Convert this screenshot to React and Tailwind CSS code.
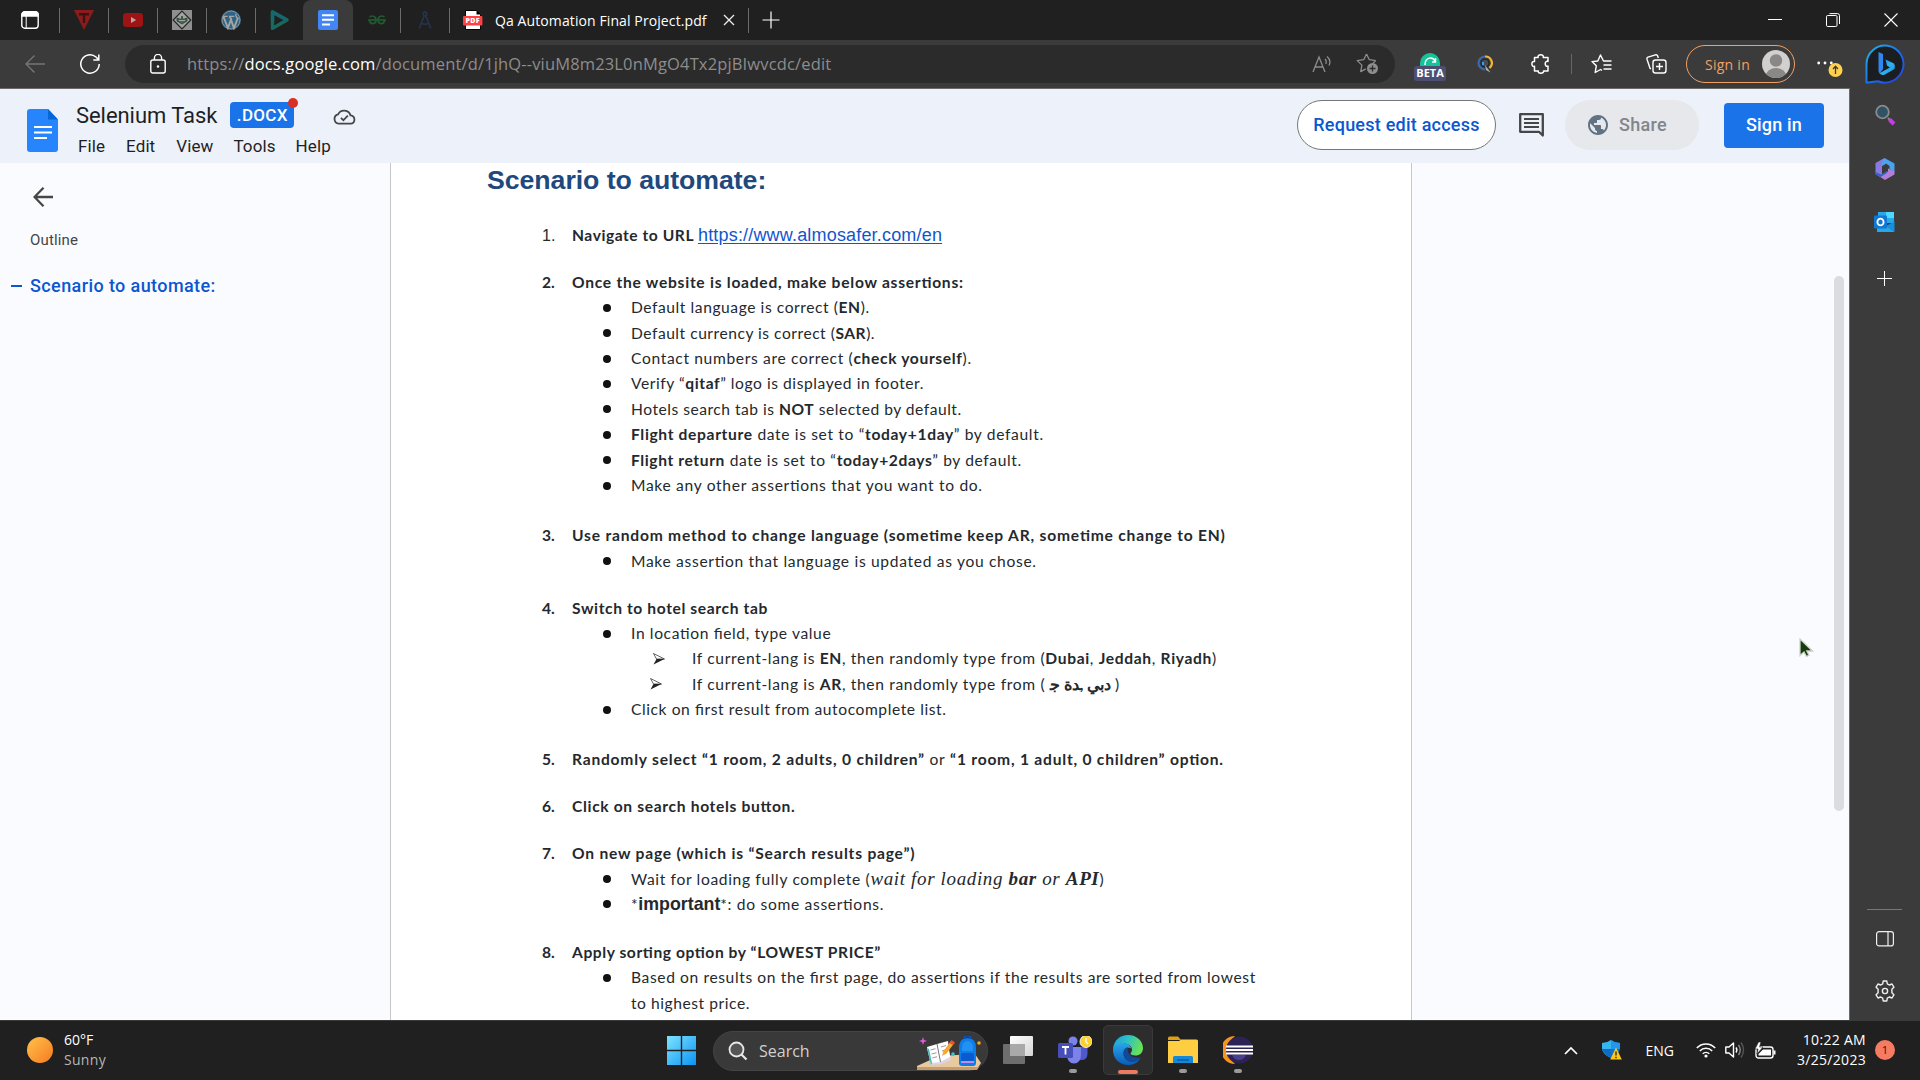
import React from "react";

const B = ({ children }) => <b className="font-bold">{children}</b>;

const Sep = () => <div className="h-[25px] w-px shrink-0 bg-[#6b6b6b]" />;
const Tab = ({ children, w = "w-12" }) => (
  <div className={`flex h-10 shrink-0 items-center justify-center ${w}`}>{children}</div>
);

function TabBar() {
  return (
    <div className="flex h-10 shrink-0 items-center bg-[#202020]">
      <Tab w="w-[59px]">
        <svg width="18" height="18" viewBox="0 0 18 18" fill="none" stroke="#fff" strokeWidth="1.4">
          <rect x="0.8" y="0.8" width="16.4" height="16.4" rx="3" />
          <path d="M1 3.8 Q1 1 4 1 H14 Q17 1 17 3.8 V5 H1Z" fill="#fff" />
          <path d="M5.2 5V17" strokeWidth="1" />
        </svg>
      </Tab>
      <Sep />
      <Tab>
        <svg width="20" height="20" viewBox="0 0 20 20">
          <path d="M0 0H20L10 20Z" fill="#8c1c1c" />
          <path d="M5 4.2H15M10 4.2V13" stroke="#3a1414" strokeWidth="2.4" fill="none" />
        </svg>
      </Tab>
      <Sep />
      <Tab>
        <svg width="20" height="14" viewBox="0 0 20 14">
          <rect width="20" height="14" rx="3.4" fill="#9e1414" />
          <path d="M8 4V10L13.2 7Z" fill="#b5a5a5" />
        </svg>
      </Tab>
      <Sep />
      <Tab>
        <svg width="20" height="20" viewBox="0 0 20 20">
          <rect width="20" height="20" fill="#8f8f8f" />
          <path d="M10 1.2L18.8 10L10 18.8L1.2 10Z" fill="#a3a3a3" stroke="#252525" strokeWidth="1.2" />
          <path d="M5 8L9 9.5L10 6L11 9.5L15 8V11L10 14L5 11Z" fill="#3f6b50" stroke="#28402f" strokeWidth=".8" />
          <path d="M7 10.5H13" stroke="#a3a3a3" />
        </svg>
      </Tab>
      <Sep />
      <Tab>
        <svg width="20" height="20" viewBox="0 0 24 24">
          <circle cx="12" cy="12" r="12" fill="#2f6485" />
          <circle cx="12" cy="12" r="10.7" fill="none" stroke="#9a9a9a" strokeWidth="1" />
          <path d="M3 8.2L8.3 21.5L12 11.5L15.5 21.8L20.5 9" fill="none" stroke="#a5a5a5" strokeWidth="2.2" />
          <path d="M2.5 7.7H8M9.5 7.7H16M18 4.5C16.5 6.5 19 8 19.8 10.5" fill="none" stroke="#a5a5a5" strokeWidth="1.5" />
          <path d="M10.5 8L12.5 12.5" stroke="#a5a5a5" strokeWidth="2" />
        </svg>
      </Tab>
      <Sep />
      <Tab>
        <svg width="20" height="20" viewBox="0 0 20 20" fill="none" strokeLinejoin="round">
          <path d="M2.5 2L17 10L2.5 18.4Z" stroke="#176a5c" strokeWidth="3.4" />
          <path d="M2.5 12V2L17 10" stroke="#17676f" strokeWidth="3.4" />
        </svg>
      </Tab>
      <div className="-ml-px flex h-10 w-[50px] shrink-0 items-center justify-center rounded-t-lg bg-[#3b3b3b]">
        <svg width="20" height="20" viewBox="0 0 20 20">
          <rect width="20" height="20" rx="2" fill="#4285f4" />
          <path d="M4 5.2H16M4 9.8H16M4 14.4H12" stroke="#fff" strokeWidth="2" />
        </svg>
      </div>
      <Tab w="w-[47px]">
        <svg width="18" height="10" viewBox="0 0 18 10" fill="none" stroke="#1f5a30" strokeWidth="1.7">
          <path d="M0 5H18" />
          <path d="M1.5 2.2C3.2 .2 8 .6 8 5C8 9.6 2 10 1.4 5.2" />
          <path d="M16.5 2.2C14.8 .2 10 .6 10 5C10 9.6 16 10 16.6 5.2" />
        </svg>
      </Tab>
      <Sep />
      <Tab>
        <svg width="14" height="18" viewBox="0 0 14 18" fill="none" stroke="#27334a" strokeWidth="1.7">
          <circle cx="7" cy="3" r="1.8" />
          <path d="M6.2 5L1.2 17.5M7.8 5L12.8 17.5M2.5 12Q7 14.5 11.5 12M7 0V2" />
        </svg>
      </Tab>
      <Sep />
      <div className="flex h-10 w-[298px] shrink-0 items-center">
        <svg className="ml-[13px]" width="20" height="20" viewBox="0 0 20 20">
          <path d="M2.5 .5H13.5L17.5 4.5V19.5H2.5Z" fill="#fff" stroke="#000" />
          <path d="M13.5 .5V4.5H17.5Z" fill="#000" />
          <rect x="0" y="6" width="19.4" height="9.6" rx="1" fill="#ff4141" />
          <text x="9.7" y="13.4" textAnchor="middle" fill="#fff" fontSize="7" fontWeight="900" fontFamily="Open Sans" letterSpacing=".4">PDF</text>
        </svg>
        <span className="ml-3 whitespace-nowrap font-['Open_Sans'] text-[14px] tracking-[.1px] text-white">Qa Automation Final Project.pdf</span>
        <svg className="ml-auto mr-[13px]" width="12" height="12" viewBox="0 0 12 12" stroke="#eee" strokeWidth="1.3">
          <path d="M1 1L11 11M11 1L1 11" />
        </svg>
      </div>
      <Sep />
      <svg className="ml-[13px]" width="18" height="18" viewBox="0 0 18 18" stroke="#fff" strokeWidth="1.2">
        <path d="M9 .5V17.5M.5 9H17.5" />
      </svg>
      <div className="ml-auto mr-[22px] flex items-center gap-[44px]">
        <svg width="14" height="14" viewBox="0 0 14 14"><path d="M0 6.5H14" stroke="#fff" /></svg>
        <svg width="14" height="14" viewBox="0 0 14 14" fill="none" stroke="#fff">
          <rect x=".5" y="2.5" width="10.5" height="11" rx="1.2" />
          <path d="M3.5 .6H11.5Q13.5 .6 13.5 2.6V11" />
        </svg>
        <svg width="14" height="14" viewBox="0 0 14 14" stroke="#fff" strokeWidth="1.1"><path d="M.5 .5L13.5 13.5M13.5 .5L.5 13.5" /></svg>
      </div>
    </div>
  );
}

function Toolbar() {
  return (
    <div className="flex h-12 shrink-0 items-center bg-[#3b3b3b]">
      <svg className="ml-[25px] shrink-0" width="20" height="18" viewBox="0 0 20 18" fill="none" stroke="#757575" strokeWidth="1.4">
        <path d="M20 9H1M9.5 .5L1 9L9.5 17.5" />
      </svg>
      <svg className="ml-[35px] shrink-0" width="20" height="20" viewBox="0 0 20 20" fill="none" stroke="#fff" strokeWidth="1.5">
        <path d="M19.2 10A9.2 9.2 0 1 1 16 3L18.6 5.6M18.8 .5V6H13.3" />
      </svg>
      <div className="ml-[25px] flex h-[38px] w-[1270px] shrink-0 items-center rounded-full bg-[#2b2b2b]">
        <svg className="ml-[25px]" width="16" height="20" viewBox="0 0 16 20" fill="none" stroke="#fff" strokeWidth="1.4">
          <rect x=".8" y="6" width="14.4" height="13" rx="2" />
          <path d="M4.4 6V4A3.6 3.6 0 0 1 11.6 4V6" />
          <circle cx="8" cy="12.5" r="1.2" fill="#fff" stroke="none" />
        </svg>
        <span className="ml-[21px] whitespace-nowrap font-['Open_Sans'] text-[16.5px] tracking-[.15px] text-[#8d8d8d]">
          https://<span className="text-white">docs.google.com</span>/document/d/1jhQ--viuM8m23L0nMgO4Tx2pjBIwvcdc/edit
        </span>
        <svg className="ml-auto" width="20" height="18" viewBox="0 0 20 18" fill="none" stroke="#8d8d8d" strokeWidth="1.3">
          <path d="M1 17L7 2L13 17M3 12H11M13 4Q15 6 13.8 9M15 1.5Q19.5 5 17 10.5" />
        </svg>
        <svg className="ml-[24px] mr-[15px]" width="24" height="22" viewBox="0 0 24 22">
          <path d="M10.5 1L13.3 6.7L19.8 7.6M19.8 7.6L17 10.3M10.5 1L7.7 6.7L1.2 7.6L5.9 12.1L4.7 18.6L9.8 15.9" fill="none" stroke="#8d8d8d" strokeWidth="1.3" strokeLinejoin="round" />
          <circle cx="16.5" cy="15.5" r="5.5" fill="#8d8d8d" />
          <path d="M16.5 12.5V18.5M13.5 15.5H19.5" stroke="#2b2b2b" strokeWidth="1.3" />
        </svg>
      </div>
      <div className="ml-[19px] flex w-8 shrink-0 flex-col items-center">
        <div className="mt-[5px] flex h-[13px] w-5 items-start justify-center overflow-hidden rounded-t-full bg-[#15c39a]">
          <svg width="20" height="14" viewBox="0 0 20 14" fill="none" stroke="#fff" strokeWidth="1.5"><path d="M5 12C5 3.5 13 3.5 15 8M15.5 5V9H12" /></svg>
        </div>
        <div className="flex h-[15px] w-8 items-center justify-center rounded-[3px] bg-[#4d4f72] font-['Open_Sans'] text-[11px] font-bold text-white">BETA</div>
      </div>
      <svg className="ml-[31px] shrink-0" width="16" height="18" viewBox="0 0 16 18" fill="none">
        <path d="M8 1.5A6.5 6.5 0 0 0 8 14.5" stroke="#3f68a8" strokeWidth="2.2" />
        <path d="M8 1.5A6.5 6.5 0 0 1 12.5 13" stroke="#f2b632" strokeWidth="2.2" />
        <circle cx="8" cy="8" r="4" fill="#444c55" stroke="#222" />
        <rect x="5" y="7" width="2" height="3" fill="#3aa0e8" />
        <path d="M8 10L13.5 17.5L9 15Z" fill="#b5b5b5" />
      </svg>
      <svg className="ml-[38px] shrink-0" width="20" height="20" viewBox="0 0 20 20" fill="none" stroke="#fff" strokeWidth="1.5" strokeLinejoin="round">
        <path d="M3.5 3.5H7.2C6.5 1.8 7.8 .8 9.7 .8C11.6 .8 12.9 1.8 12.2 3.5H17V7.5C15.4 7 14.2 8 14.2 9.8C14.2 11.6 15.4 12.6 17 12.1V17H12.5C13 18.3 11.6 19.2 9.8 19.2C8 19.2 6.8 18.3 7.3 17H3.5V12.3C2 12.8 .9 11.6 .9 9.9C.9 8.2 2 7.1 3.5 7.6Z" />
      </svg>
      <div className="ml-[20px] h-5 w-px bg-[#666]" />
      <svg className="ml-[19px] shrink-0" width="21" height="20" viewBox="0 0 21 20" fill="none" stroke="#fff" strokeWidth="1.4" strokeLinejoin="round">
        <path d="M13.5 7H12.5L9.5 1L6.8 7L1 7.6L5.3 11.8L4.2 18.5L9.5 15.5L11 16.3M13 7H20.5M12.5 11H20.5M12.5 15H20.5" />
      </svg>
      <svg className="ml-[34px] shrink-0" width="21" height="20" viewBox="0 0 21 20" fill="none" stroke="#fff" strokeWidth="1.4">
        <path d="M5 14.8L4 14.3L1 5.3Q.6 3.8 2 3.2L9.5 .8Q11 .4 11.6 1.8L12.3 4" />
        <rect x="7" y="6" width="13" height="13" rx="2.5" />
        <path d="M13.5 9V16M10 12.5H17" />
      </svg>
      <div className="ml-[19px] flex h-[38px] w-[109px] shrink-0 items-center justify-between rounded-full border border-[#f2a063] pl-[18px] pr-1 text-[#f2a063]">
        <span className="whitespace-nowrap font-['Open_Sans'] text-[14px] tracking-[.26px]">Sign in</span>
        <svg width="28" height="28" viewBox="0 0 28 28">
          <clipPath id="av"><circle cx="14" cy="14" r="14" /></clipPath>
          <g clipPath="url(#av)">
            <rect width="28" height="28" fill="#d2d0ce" />
            <circle cx="14" cy="10.5" r="6.2" fill="#8a8886" />
            <ellipse cx="14" cy="25.5" rx="10" ry="7.5" fill="#8a8886" />
          </g>
        </svg>
      </div>
      <svg className="ml-[22px] mt-[12px] shrink-0" width="26" height="26" viewBox="0 0 26 26">
        <g fill="#fff"><circle cx="1.7" cy="6" r="1.4" /><circle cx="8" cy="6" r="1.4" /><circle cx="14.3" cy="6" r="1.4" /></g>
        <circle cx="18.5" cy="13" r="7" fill="#ffd14f" />
        <path d="M18.5 17V9.5M16 12L18.5 9.3L21 12" fill="none" stroke="#3b3b3b" strokeWidth="1.3" />
      </svg>
      <svg className="ml-[22px] shrink-0" width="40" height="40" viewBox="0 0 40 40">
        <defs>
          <linearGradient id="bo" x1="0" y1="0" x2="1" y2="1"><stop stopColor="#1fb6e8" /><stop offset=".6" stopColor="#1b66e8" /><stop offset="1" stopColor="#2340d8" /></linearGradient>
          <linearGradient id="bb" x1="0" y1="0" x2="1" y2="1"><stop stopColor="#2a7bea" /><stop offset=".5" stopColor="#2db4ee" /><stop offset="1" stopColor="#1f8af0" /></linearGradient>
        </defs>
        <path d="M1.5 38.5V20A18.5 18.5 0 1 1 13 37.2C9 37.2 7 38.8 1.5 38.5Z" fill="#1b1d20" stroke="url(#bo)" strokeWidth="2" />
        <path d="M13.5 8L18 10V25L14.8 29.5Q13.5 28.5 13.5 26.5Z" fill="#2f86ee" />
        <path d="M20.5 15.5L29 19.5Q30.5 21.5 29.5 25L20 30.5Q16.5 32 14.5 29.3L25 23.4L22 21.5Z" fill="url(#bb)" />
      </svg>
    </div>
  );
}

function DocsHeader() {
  return (
    <div className="flex h-[74px] shrink-0 items-start bg-[#edf1fa] font-[Roboto]">
      <svg className="ml-[27px] mt-5 shrink-0" width="31" height="43" viewBox="0 0 31 43">
        <path d="M3 0H21L31 10.5V40Q31 43 28 43H3Q0 43 0 40V3Q0 0 3 0Z" fill="#2684fc" />
        <path d="M21 0L31 10.5H21Z" fill="#0066da" />
        <path d="M7 18H25M7 23.5H25M7 29H20" stroke="#fff" strokeWidth="2.2" />
      </svg>
      <div className="ml-[18px] mt-[11px] flex flex-col">
        <div className="flex h-[30px] items-center">
          <span className="whitespace-nowrap pt-[2px] text-[22px] leading-[30px] tracking-[-.06px] text-[#1f1f1f]">Selenium Task</span>
          <div className="relative ml-[13px] flex h-[26px] w-16 items-center justify-center rounded-[4px] bg-[#1a73e8] pt-px text-[17px] font-medium tracking-[.3px] text-white">
            .DOCX
            <i className="absolute -right-1 -top-1 size-[10px] rounded-full bg-[#d93025]" />
          </div>
          <svg className="ml-[39px] mt-[3px]" width="23" height="16" viewBox="0 0 24 16" fill="none" stroke="#444746" strokeWidth="1.9">
            <path d="M6 15A5 5 0 0 1 5.3 5.2A7 7 0 0 1 18.3 6.3A4.4 4.4 0 0 1 18.800 15Z" />
            <path d="M8.3 9L10.8 11.4L15.5 6.5" />
          </svg>
        </div>
        <div className="mt-[3px] flex gap-[21px] pl-[2px] text-[17px] leading-[26px] tracking-[.1px] text-[#1f1f1f]">
          <span>File</span>
          <span>Edit</span>
          <span>View</span>
          <span className="-ml-px">Tools</span>
          <span className="-ml-px">Help</span>
        </div>
      </div>
      <div className="ml-auto mr-[25px] mt-[11px] flex items-center font-medium">
        <div className="flex h-[50px] w-[199px] items-center justify-center rounded-full border border-[#747775] bg-white pb-[2px] text-[18px] tracking-[.23px] text-[#0b57d0]">
          <span className="whitespace-nowrap">Request edit access</span>
        </div>
        <svg className="ml-[23px] mt-px" width="25" height="25" viewBox="0 0 25 25" fill="none" stroke="#444746" strokeWidth="2.3">
          <path d="M1.2 1.2H23.8V22.5L20 18.8H1.2Z" strokeLinejoin="round" />
          <path d="M5 6H20M5 10H20M5 14H20" strokeWidth="2" />
        </svg>
        <div className="ml-[21px] flex h-[50px] w-[134px] items-center rounded-full bg-[#e6e8ec] text-[18px] tracking-[.3px] text-[#80868b]">
          <svg className="ml-[23px]" width="20" height="20" viewBox="2 2 20 20" fill="#5f7384">
            <path d="M12 2C6.48 2 2 6.48 2 12s4.48 10 10 10 10-4.48 10-10S17.52 2 12 2zm-1 17.93c-3.95-.49-7-3.85-7-7.93 0-.62.08-1.21.21-1.79L9 15v1c0 1.1.9 2 2 2v1.93zm6.9-2.54c-.26-.81-1-1.39-1.9-1.39h-1v-3c0-.55-.45-1-1-1H8v-2h2c.55 0 1-.45 1-1V7h2c1.1 0 2-.9 2-2v-.41c2.93 1.19 5 4.06 5 7.41 0 2.08-.8 3.97-2.1 5.39z" />
          </svg>
          <span className="-mt-px ml-[11px]">Share</span>
        </div>
        <div className="ml-[25px] flex h-[45px] w-[100px] items-center justify-center rounded-[4px] bg-[#1a73e8] pb-px text-[18px] tracking-[.2px] text-white">
          <span className="whitespace-nowrap">Sign in</span>
        </div>
      </div>
    </div>
  );
}

function Block({ n, title, ls = "tracking-[.74px]", gap, plain, children }) {
  return (
    <div className={gap}>
      <div className="flex h-[25.4px] items-baseline leading-[25.4px]">
        <span className={plain ? "w-[30px] font-['Liberation_Sans'] text-[16px]" : "w-[30px] font-bold"}>{n}.</span>
        <span className={`whitespace-nowrap font-bold ${ls}`}>{title}</span>
      </div>
      {children}
    </div>
  );
}

function Item({ ls = "tracking-[.65px]", children }) {
  return (
    <div className="ml-[61px] flex h-[25.4px] items-center leading-[25.4px]">
      <i className="mr-[20px] size-2 rounded-full bg-[#111]" />
      <span className={`whitespace-nowrap ${ls}`}>{children}</span>
    </div>
  );
}

function Arrow({ ls, children, shift = "ml-[111px] mr-[27px]" }) {
  return (
    <div className="flex h-[25.4px] items-center leading-[25.4px]">
      <svg className={shift} width="12" height="12" viewBox="0 0 12 12">
        <path d="M.5 .5L11.5 6H3.5Z" fill="none" stroke="#222" strokeWidth=".7" />
        <path d="M11.5 6L.5 11.5L3.5 6Z" fill="#222" />
      </svg>
      <span className={`whitespace-nowrap ${ls}`}>{children}</span>
    </div>
  );
}

function Page() {
  return (
    <div className="h-full w-[1022px] shrink-0 overflow-hidden border-x border-[#c7c7c7] bg-white font-[Lato] text-[15.6px] text-[#24292e] [font-feature-settings:'liga'_1]">
      <h1 className="ml-[96px] mt-[1px] w-max whitespace-nowrap font-['Liberation_Sans'] text-[26.7px] font-bold leading-[32px] tracking-[-.05px] text-[#1f497d]">Scenario to automate:</h1>
      <div className="ml-[151px]">
        <Block n="1" plain ls="tracking-[.55px]" gap="mt-[26.6px]" title={<>Navigate to URL <span className="font-['Liberation_Sans'] text-[18px] font-normal tracking-[.18px] text-[#1155cc] underline underline-offset-2">https://www.almosafer.com/en</span></>} />
        <Block n="2" gap="mt-[21.8px]" title="Once the website is loaded, make below assertions:">
          <Item ls="tracking-[.57px]">Default language is correct (<B>EN</B>).</Item>
          <Item ls="tracking-[.52px]">Default currency is correct (<B>SAR</B>).</Item>
          <Item>Contact numbers are correct (<B>check yourself</B>).</Item>
          <Item ls="tracking-[.56px]">Verify “<B>qitaf</B>” logo is displayed in footer.</Item>
          <Item ls="tracking-[.51px]">Hotels search tab is <B>NOT</B> selected by default.</Item>
          <Item><B>Flight departure</B> date is set to “<B>today+1day</B>” by default.</Item>
          <Item ls="tracking-[.61px]"><B>Flight return</B> date is set to “<B>today+2days</B>” by default.</Item>
          <Item ls="tracking-[.68px]">Make any other assertions that you want to do.</Item>
        </Block>
        <Block n="3" ls="tracking-[.8px]" gap="mt-[25px]" title="Use random method to change language (sometime keep AR, sometime change to EN)">
          <Item ls="tracking-[.68px]">Make assertion that language is updated as you chose.</Item>
        </Block>
        <Block n="4" ls="tracking-[.62px]" gap="mt-[21.5px]" title="Switch to hotel search tab">
          <Item ls="tracking-[.63px]">In location field, type value</Item>
          <Arrow ls="tracking-[.65px]">If current-lang is <B>EN</B>, then randomly type from (<B>Dubai</B>, <B>Jeddah</B>, <B>Riyadh</B>)</Arrow>
          <Arrow ls="tracking-[.65px]" shift="ml-[108px] mr-[30px]">If current-lang is <B>AR</B>, then randomly type from ( <span className="font-bold tracking-normal">ﺟ&lrm; ﺪة&lrm;, دبي&lrm; </span>)</Arrow>
          <Item ls="tracking-[.58px]">Click on first result from autocomplete list.</Item>
        </Block>
        <Block n="5" ls="tracking-[.78px]" gap="mt-[24.4px]" title={<>Randomly select “1 room, 2 adults, 0 children” <span className="font-normal">or</span> “1 room, 1 adult, 0 children” option.</>} />
        <Block n="6" ls="tracking-[.66px]" gap="mt-[21.6px]" title="Click on search hotels button." />
        <Block n="7" ls="tracking-[.79px]" gap="mt-[21.6px]" title="On new page (which is “Search results page”)">
          <Item ls="tracking-[.65px]">Wait for loading fully complete (<i className="font-['Liberation_Serif'] text-[19px] tracking-[.64px]">wait for loading <b>bar</b> or <b>API</b></i>)</Item>
          <Item ls="tracking-[.68px]">*<b className="font-['Liberation_Sans'] text-[17.8px] tracking-normal">important</b>*: do some assertions.</Item>
        </Block>
        <Block n="8" ls="tracking-[.57px]" gap="mt-[23px]" title="Apply sorting option by “LOWEST PRICE”">
          <Item ls="tracking-[.61px]">Based on results on the first page, do assertions if the results are sorted from lowest</Item>
          <div className="ml-[89px] leading-[25.4px] tracking-[.55px]">to highest price.</div>
        </Block>
      </div>
    </div>
  );
}

function Sidebar() {
  return (
    <div className="flex w-[71px] shrink-0 flex-col items-center border-l border-[#6a6a6a] bg-[#3b3b3b] pr-px">
      <svg className="mt-4" width="22" height="22" viewBox="0 0 22 22" fill="none">
        <path d="M14 14L16 16" stroke="#888" strokeWidth="2" />
        <path d="M15.5 15.5L20 20" stroke="#c23fe0" strokeWidth="4" />
        <circle cx="8.5" cy="8" r="6.3" fill="#2f5264" stroke="#8a8a8a" strokeWidth="1.8" />
      </svg>
      <svg className="mt-8" width="22" height="22" viewBox="0 0 22 22">
        <path d="M10.5 0L1.5 5V16L6.5 19L8 16.5V8L12 5.5Z" fill="#8a7ae0" />
        <path d="M10.5 0L20.5 5.5V13.5L15.5 11V8L12 5.5L8 8V4Z" fill="#4aa3ee" />
        <path d="M3 17L11 22L20.5 16.5V13L14 10.5V13.5L8 16.5Z" fill="#b07fd8" />
        <path d="M1.5 14V16.5L6.5 19L13 15V13L7 16.5Z" fill="#3c5fc4" />
      </svg>
      <svg className="mt-8" width="21" height="21" viewBox="0 0 21 21">
        <rect x="4" y="0" width="16" height="11" fill="#28a8ea" />
        <rect x="12" y="0" width="8" height="6" fill="#50d9ff" />
        <path d="M3 9L20.5 20V9.5L12 14Z" fill="#1490df" />
        <path d="M3 11V20H20.5L12 14Z" fill="#28a8ea" />
        <rect x="0" y="3.5" width="13" height="13" rx="1" fill="#0f78d4" />
        <ellipse cx="6.5" cy="10" rx="3.1" ry="3.4" fill="none" stroke="#fff" strokeWidth="1.8" />
      </svg>
      <svg className="mt-[38px]" width="15" height="15" viewBox="0 0 15 15" stroke="#fff"><path d="M7.5 0V15M0 7.5H15" /></svg>
      <div className="mt-auto h-px w-[35px] bg-[#777]" />
      <svg className="mt-[21px]" width="18" height="16" viewBox="0 0 18 16" fill="none" stroke="#f0f0f0" strokeWidth="1.2">
        <rect x=".6" y=".6" width="16.8" height="14.3" rx="2.5" /><path d="M12 .6V15" />
      </svg>
      <svg className="mb-[18px] mt-[33px]" width="22" height="22" viewBox="0 0 22 22" fill="none" stroke="#f0f0f0" strokeWidth="1.4" strokeLinejoin="round">
        <path d="M9.2 1H12.8L13.3 3.8L15.3 5L18 4L19.9 7.2L17.9 9.2V12.8L19.9 14.8L18 18L15.3 17L13.3 18.2L12.8 21H9.2L8.7 18.2L6.7 17L4 18L2.1 14.8L4.1 12.8V9.2L2.1 7.2L4 4L6.7 5L8.7 3.8Z" />
        <circle cx="11" cy="11" r="2.6" />
      </svg>
    </div>
  );
}

const Dot = () => <i className="absolute -bottom-[9px] h-[4px] w-2 rounded-full bg-[#9a9a9a]" />;

function Taskbar() {
  return (
    <div className="flex h-[60px] shrink-0 items-center border-t border-[#3a3a3a] bg-[#202020] pb-px font-['Open_Sans'] text-white">
      <div className="flex w-[667px] items-center gap-3 pl-[27px]">
        <div className="size-[26px] rounded-full bg-linear-to-br from-[#ffc24a] to-[#f5791f]" />
        <div className="-ml-px -mt-px flex flex-col text-[14px] leading-5">
          <span>60°F</span>
          <span className="tracking-[.3px] text-[#b5b5b5]">Sunny</span>
        </div>
      </div>
      <svg width="29" height="29" viewBox="0 0 29 29">
        <defs><linearGradient id="win" x1="0" y1="0" x2="1" y2="1"><stop stopColor="#7fe3ff" /><stop offset="1" stopColor="#0a94f5" /></linearGradient></defs>
        <path d="M0 0H13.8V13.8H0ZM15.2 0H29V13.8H15.2ZM0 15.2H13.8V29H0ZM15.2 15.2H29V29H15.2Z" fill="url(#win)" />
      </svg>
      <div className="ml-[17px] mt-px flex h-10 w-[275px] items-center rounded-full border border-[#444] bg-[#393939]">
        <svg className="ml-[14px]" width="20" height="20" viewBox="0 0 20 20" fill="none" stroke="#e8e8e8" strokeWidth="1.8"><circle cx="8.5" cy="8.5" r="7" fill="#555" /><path d="M13.5 13.5L18.5 18.5" strokeWidth="2.2" /></svg>
        <span className="ml-[11px] text-[16px] text-[#d0d0d0]">Search</span>
        <svg className="ml-auto mr-[4px] mt-1" width="66" height="34" viewBox="0 0 66 34">
          <path d="M0 30L22 20L58 18L64 27L60 33H0Z" fill="#e8c9a0" />
          <path d="M0 31H62L60 34H0Z" fill="#c79c6b" />
          <path d="M10 12L21 9L30 6L34 24L24 28L14 29Z" fill="#d9d5ee" />
          <path d="M10 11L20 8L31 5L33 21L23 26L14 27Z" fill="#fff" />
          <path d="M12 13L15 27L14 29L10 12Z" fill="#49b8b8" />
          <path d="M20 8L23.5 26" stroke="#777" />
          <path d="M13.5 14L18.5 12.7M14.5 18L19.5 16.7M15.3 22L20 20.7M24 11L29 9.5M25 15L30 13.5" stroke="#9a9a9a" />
          <path d="M25 20L26.5 15L34 5L37 7.5L29.5 17.5Z" fill="#f7a72f" />
          <path d="M32.5 7L34.5 4L38 6.5L36 9Z" fill="#e8542f" />
          <path d="M6 1L7 4L10 5L7 6L6 9L5 6L2 5L5 4Z" fill="#e35be0" />
          <path d="M42 12Q42 2 50.5 2Q59 2 59 12V27Q59 30 56 30H45Q42 30 42 27Z" fill="#0d7dea" />
          <path d="M47.500 3V1Q50.500 -1.500 53.500 1V3" fill="none" stroke="#0a55c4" strokeWidth="1.5" />
          <path d="M45 12Q45 5 50.500 5Q56 5 56 12V15H45Z" fill="#2291f2" />
          <rect x="44" y="17" width="13" height="10" rx="2" fill="#0a5bd0" /><path d="M44 26H57" stroke="#c58be8" strokeWidth="2" />
          <circle cx="36" cy="18" r="1.8" fill="#37c7c7" /><circle cx="62" cy="7" r="1.8" fill="#f5a623" />
        </svg>
      </div>
      <svg className="ml-[15px]" width="30" height="28" viewBox="0 0 30 28">
        <defs><linearGradient id="tv" x1="0" y1="0" x2="1" y2="1"><stop stopColor="#fff" /><stop offset="1" stopColor="#d5d5d5" /></linearGradient></defs>
        <rect x="7" y="0" width="23" height="20" rx="1" fill="url(#tv)" />
        <rect x="0" y="8" width="22" height="20" rx="1" fill="#7d7d7d" fillOpacity=".85" />
        <rect x="7" y="8" width="15" height="12" fill="#a9a9a9" />
      </svg>
      <div className="relative ml-[25px] flex justify-center">
        <svg width="34" height="28" viewBox="0 0 34 28">
          <circle cx="15" cy="5" r="4.5" fill="#7b83eb" />
          <circle cx="25" cy="7" r="3.5" fill="#5059c9" />
          <path d="M20 11H29.5V18Q29 24 23.5 24H20Z" fill="#5059c9" />
          <path d="M9 11H23V19Q22.5 27.5 16 27.5Q9.5 27.5 9 19Z" fill="#7b83eb" />
          <rect x="0" y="7" width="15" height="15" rx="1.5" fill="#464eb8" />
          <path d="M4 11H11M7.5 11V18.5" stroke="#fff" strokeWidth="1.8" />
          <circle cx="28" cy="5.5" r="6" fill="#fbd12a" stroke="#fff" strokeWidth=".8" />
          <path d="M28 2V6L30 8" stroke="#fff" strokeWidth="1.4" fill="none" />
        </svg>
        <i className="absolute -bottom-[9px] left-[11px] h-[4px] w-2 rounded-full bg-[#9a9a9a]" />
      </div>
      <div className="relative ml-[11px] flex h-[50px] w-[50px] items-center justify-center rounded-[5px] border border-[#3a3a3a] bg-[#2d2d2d]">
        <svg width="30" height="30" viewBox="0 0 30 30">
          <defs>
            <linearGradient id="e1" x1="0" y1="0" x2="1" y2=".3"><stop stopColor="#1d9be0" /><stop offset=".5" stopColor="#2cc0c8" /><stop offset="1" stopColor="#66e05a" /></linearGradient>
            <linearGradient id="e2" x1="0" y1="0" x2="0" y2="1"><stop stopColor="#2aa5ea" /><stop offset="1" stopColor="#0a5cb8" /></linearGradient>
          </defs>
          <path d="M0 14C1 5 7 0 15 0C24 0 30 6.5 30 13C30 18 26.5 20.5 22.5 20.5C19.5 20.5 17.5 19.5 17.5 18.5C17.5 17.7 19 17 19 14.5C19 11 15 8.5 11 8.5C5.5 8.5 1.5 11 0 14Z" fill="url(#e1)" />
          <path d="M0 15C0 10.5 5 7.5 10.5 8C15 8.5 18 11 18.5 13.5C14.5 11.5 10.5 14 10.5 18.5C10.5 24 15.5 27 20 26.5C23 26.2 26 24.5 27.5 23C25 27.5 20.5 30 15 30C6.5 30 0 23.5 0 15Z" fill="url(#e2)" />
          <path d="M10.5 18C10.5 14.5 12.5 12.5 15 12.5C14 17 16.5 21.5 22 22.5Q26.5 23 27.5 22.5C25.5 26 22 27.5 18.5 27C14 26.5 10.5 23 10.5 18Z" fill="#12499a" />
        </svg>
        <i className="absolute bottom-0 h-[4px] w-5 rounded-full bg-[#f07a60]" />
      </div>
      <div className="relative ml-[15px] flex justify-center">
        <svg width="30" height="28" viewBox="0 0 30 28">
          <path d="M0 2Q0 .5 1.5 .5H10L13 4H0Z" fill="#e0a010" />
          <path d="M0 5H11L13 3.5H28.5Q30 3.5 30 5V27H0Z" fill="#ffcd42" />
          <path d="M5 27V21.5Q5 20 6.5 20H23.5Q25 20 25 21.5V27Z" fill="#1589d8" /><path d="M9 24H21" stroke="#0a5da8" strokeWidth="1.5" />
        </svg>
        <Dot />
      </div>
      <div className="relative ml-[25px] flex justify-center">
        <svg width="30" height="28" viewBox="0 0 30 28">
          <path d="M12 0A14 14 0 0 0 12 28A18 18 0 0 1 12 0Z" fill="#f7941e" />
          <circle cx="16.5" cy="14" r="13.5" fill="#2c2255" />
          <path d="M3 10.5H30M3 14H30M3 17.5H30" stroke="#fff" strokeWidth="1.8" />
          <path d="M9 19H23Q21 24 16 24Q11 24 9 19Z" fill="#47408c" />
        </svg>
        <Dot />
      </div>
      <div className="ml-auto mr-[25px] flex items-center">
        <svg width="14" height="9" viewBox="0 0 14 9" fill="none" stroke="#fff" strokeWidth="1.7"><path d="M1 8L7 2L13 8" /></svg>
        <svg className="ml-[24px]" width="20" height="20" viewBox="0 0 20 20">
          <path d="M0 3Q5 3 9 0V18Q0 14 0 8Z" fill="#35b5f2" /><path d="M9 0Q13 3 18 3V8Q18 14 9 18Z" fill="#1272c8" />
          <path d="M0 9H9V18Q1 14 0 9Z" fill="#0f6cc4" /><path d="M9 0V9H18Q18 5 18 3Q13 3 9 0Z" fill="#2196ea" />
          <path d="M14 7.5L19.8 19.5H8.2Z" fill="#ffc61a" /><path d="M14 11.5V15.5M14 16.8V18.2" stroke="#222" strokeWidth="1.3" />
        </svg>
        <span className="ml-[23px] text-[14px]">ENG</span>
        <svg className="ml-[22px]" width="20" height="16" viewBox="0 0 20 16" fill="none" stroke="#fff" strokeWidth="1.5">
          <path d="M.8 6A12.5 12.5 0 0 1 19.2 6M3.8 9A8.5 8.5 0 0 1 16.2 9M6.7 11.8A4.7 4.7 0 0 1 13.3 11.8" /><circle cx="10" cy="14" r="1.6" fill="#fff" stroke="none" />
        </svg>
        <svg className="ml-[9px]" width="20" height="18" viewBox="0 0 20 18" fill="none" stroke="#fff" strokeWidth="1.4">
          <path d="M.8 6V12H4L8.5 16V2L4 6Z" strokeLinejoin="round" /><path d="M11 6.5Q12.8 9 11 11.5" /><path d="M13.5 4Q17 9 13.5 14" stroke="#8a8a8a" /><path d="M16 1.5Q21 9 16 16.5" stroke="#555" />
        </svg>
        <svg className="ml-[10px]" width="21" height="17" viewBox="0 0 21 17" fill="none" stroke="#fff" strokeWidth="1.4">
          <rect x="1" y="5" width="17" height="11" rx="2.5" /><path d="M19.5 8.5V12.5" strokeWidth="2" />
          <path d="M8 7.5H16V13.5H3.5V12Z" fill="#fff" stroke="none" /><path d="M3.5 0L0 7H3L2 12L8 5H4.5L6 0Z" fill="#fff" stroke="#202020" strokeWidth=".6" />
        </svg>
        <div className="-mt-px ml-[21px] flex flex-col items-end text-[14px] leading-5 tracking-[.3px]">
          <span className="whitespace-nowrap">10:22 AM</span>
          <span>3/25/2023</span>
        </div>
        <div className="ml-[9px] flex size-5 items-center justify-center rounded-full bg-[#f57c62] text-[11px] text-[#2a1512]">1</div>
      </div>
    </div>
  );
}

export default function App() {
  return (
    <div className="flex h-[1080px] w-[1920px] flex-col overflow-hidden bg-[#3b3b3b]">
      <TabBar />
      <Toolbar />
      <div className="flex min-h-0 grow">
        <div className="flex w-[1849px] shrink-0 flex-col border-t border-[#6a6a6a]">
          <DocsHeader />
          <div className="flex min-h-0 grow bg-[#fafbfe]">
            <div className="w-[390px] shrink-0 font-[Roboto]">
              <svg className="ml-[33px] mt-[24px]" width="20" height="20" viewBox="0 0 20 20" fill="none" stroke="#444746" strokeWidth="2.3"><path d="M20 10H1.5M10.5 .8L1.5 10L10.5 19.2" /></svg>
              <div className="ml-[30px] mt-[22px] text-[15px] leading-[22px] tracking-[.15px] text-[#444746]">Outline</div>
              <div className="mt-[23px] flex items-center text-[18px] font-medium leading-6 tracking-[.4px] text-[#0b57d0]">
                <i className="ml-[11px] mr-2 h-[2px] w-[11px] bg-[#0b57d0]" />
                <span className="whitespace-nowrap">Scenario to automate:</span>
              </div>
            </div>
            <Page />
            <div className="relative grow">
              <div className="ml-[422px] mt-[113px] h-[535px] w-[10px] rounded-full bg-[#dadce0]" />
              <svg className="absolute left-[387px] top-[475px]" width="15" height="20" viewBox="0 0 15 20"><path d="M1 1V17.5L5 14L7.5 18.5L10 17.2L7.8 13H13.5Z" fill="#173d0c" stroke="#d0d0d0" strokeWidth="1.3" /></svg>
            </div>
          </div>
        </div>
        <Sidebar />
      </div>
      <Taskbar />
    </div>
  );
}
